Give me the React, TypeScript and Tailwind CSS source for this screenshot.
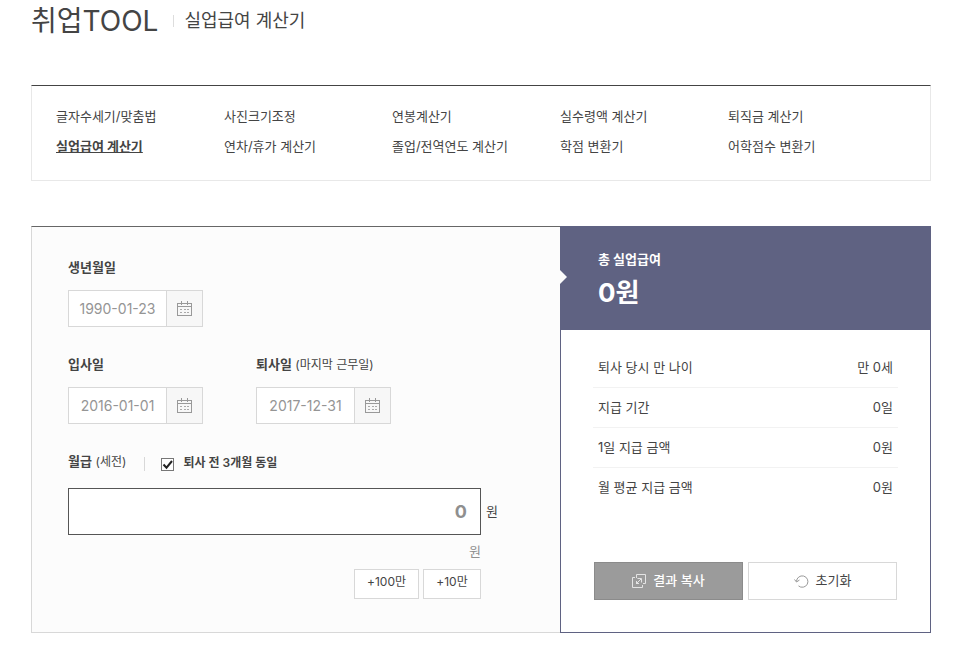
import { useState } from "react";

const tools = [
  "글자수세기/맞춤법",
  "사진크기조정",
  "연봉계산기",
  "실수령액 계산기",
  "퇴직금 계산기",
  "실업급여 계산기",
  "연차/휴가 계산기",
  "졸업/전역연도 계산기",
  "학점 변환기",
  "어학점수 변환기",
];

const results = [
  ["퇴사 당시 만 나이", "만 0세"],
  ["지급 기간", "0일"],
  ["1일 지급 금액", "0원"],
  ["월 평균 지급 금액", "0원"],
];

function CalendarIcon() {
  return (
    <svg width="15" height="15" viewBox="0 0 15 15" fill="none" stroke="#999" shapeRendering="crispEdges" aria-hidden="true">
      <path d="M0.5 2.5h14v12h-14zM0 5.5h15M4.5 0v4M10.5 0v4" />
      <path d="M3 8.5h9M3 11.5h9" stroke="#aaa" strokeDasharray="2 1.5" />
    </svg>
  );
}

function CopyIcon() {
  return (
    <svg width="14" height="14" viewBox="0 0 14 14" fill="none" stroke="#e4e4e4" aria-hidden="true">
      <path d="M4.5 4V0.5h9v9H11" />
      <path d="M3 3.5H0.5v10h10V11" />
      <path d="M4 10l5-5M5.5 4.5h4v4M4.5 7v2.500h2.500" />
    </svg>
  );
}

function ResetIcon() {
  return (
    <svg width="15" height="13" viewBox="0 0 15 13" fill="none" stroke="#999" aria-hidden="true">
      <path d="M2.500 6.500a5.700 5.700 0 1 1 2 4.400" />
      <path d="M0.500 4.500l2 2.500 3-2" />
    </svg>
  );
}

function DateField({ id, label, note, initial }: { id: string; label: string; note?: string; initial: string }) {
  const [value, setValue] = useState(initial);
  return (
    <div>
      <label htmlFor={id} className="block h-5 leading-5">
        <span className="font-bold">{label}</span>
        {note && <span className="text-xs leading-5"> {note}</span>}
      </label>
      <div className="mt-[13px] flex h-[37px] w-[135px] border border-[#d8d8d8] bg-white">
        <input
          id={id}
          type="text"
          value={value}
          onChange={(e) => setValue(e.target.value)}
          className="w-[98px] border-r border-[#d8d8d8] text-center text-sm text-[#959595] outline-none"
        />
        <button type="button" aria-label={`${label} 달력`} className="flex flex-1 items-center justify-center bg-[#f7f7f7]">
          <CalendarIcon />
        </button>
      </div>
    </div>
  );
}

export default function App() {
  const [pay, setPay] = useState("0");
  const [same, setSame] = useState(true);

  return (
    <div className="bg-white pr-[45px] pb-6 pl-[31px] font-['Inter','Noto_Sans_CJK_KR',sans-serif] text-[13px] text-[#444]">
      <header className="flex h-[42px] items-center">
        <h1 className="text-[28px] leading-10">취업TOOL</h1>
        <span className="mr-2.5 ml-[15px] h-3 w-px bg-[#ddd]" />
        <h2 className="text-lg leading-10">실업급여 계산기</h2>
      </header>

      <nav className="mt-[43px] border border-t-[#444] border-r-[#e8e8e8] border-b-[#e8e8e8] border-l-[#e8e8e8] pt-[15px] pr-[34px] pb-[19px] pl-6">
        <ul className="grid grid-cols-5">
          {tools.map((tool) => (
            <li key={tool} className="leading-[30px]">
              <a href="#" className={tool === "실업급여 계산기" ? "font-bold underline" : ""}>
                {tool}
              </a>
            </li>
          ))}
        </ul>
      </nav>

      <main className="mt-[45px] flex">
        <form className="flex-1 border border-r-0 border-t-[#666] border-b-[#d8d8d8] border-l-[#d8d8d8] bg-[#fcfcfc] px-9 pt-[30px] pb-[33px]">
          <DateField id="birth" label="생년월일" initial="1990-01-23" />
          <div className="mt-[27px] flex gap-[53px]">
            <DateField id="join" label="입사일" initial="2016-01-01" />
            <DateField id="leave" label="퇴사일" note="(마지막 근무일)" initial="2017-12-31" />
          </div>

          <div className="mt-[27px] flex h-5 items-center">
            <label htmlFor="pay" className="h-5 leading-5">
              <span className="font-bold">월급</span> <span className="text-xs leading-5">(세전)</span>
            </label>
            <span className="mt-1.5 mr-4 ml-[18px] h-3.5 w-px bg-[#d8d8d8]" />
            <span className="mt-1.5 grid size-[13px]">
              <input
                id="same"
                type="checkbox"
                checked={same}
                onChange={(e) => setSame(e.target.checked)}
                className="col-start-1 row-start-1 size-[13px] appearance-none border border-[#777] bg-white"
              />
              {same && (
                <svg viewBox="0 0 13 13" className="pointer-events-none col-start-1 row-start-1 size-[13px]" fill="none" stroke="#222" strokeWidth="2" aria-hidden="true">
                  <path d="M2.500 6.500l3 3.200L11 3" />
                </svg>
              )}
            </span>
            <label htmlFor="same" className="mt-1 ml-[9px] text-xs leading-5 font-semibold">
              퇴사 전 3개월 동일
            </label>
          </div>

          <div className="mt-[17px] flex items-center gap-[5px]">
            <input
              id="pay"
              type="text"
              value={pay}
              onChange={(e) => setPay(e.target.value)}
              className="h-[47px] w-[413px] border border-[#555] bg-white pr-[13px] text-right text-lg font-bold text-[#8f8f8f] outline-none"
            />
            <span>원</span>
          </div>
          <div className="w-[413px]">
            <p className="mt-1.5 text-right leading-5 text-[#8f8f8f]">원</p>
            <div className="mt-2 flex justify-end gap-1">
              <button type="button" className="h-[30px] w-[65px] border border-[#d8d8d8] bg-white pb-1 text-xs">
                +100만
              </button>
              <button type="button" className="h-[30px] w-[58px] border border-[#d8d8d8] bg-white pb-1 text-xs">
                +10만
              </button>
            </div>
          </div>
        </form>

        <section className="flex w-[371px] flex-col border border-[#5f6282] bg-white">
          <div className="relative h-[103px] bg-[#5f6282] pt-[22px] pl-[37px] text-white">
            <svg width="7" height="14" viewBox="0 0 7 14" className="absolute top-[43px] left-[-1px]" fill="#fcfcfc" aria-hidden="true">
              <path d="M0 0l7 7-7 7z" />
            </svg>
            <h3 className="leading-5 font-bold">총 실업급여</h3>
            <p className="text-[26px] leading-[48px] font-bold">0원</p>
          </div>
          <dl className="px-8 pt-[18px]">
            {results.map(([name, value]) => (
              <div key={name} className="flex h-10 items-center justify-between border-b border-[#f2f2f2] px-[5px] last:border-b-0">
                <dt>{name}</dt>
                <dd>{value}</dd>
              </div>
            ))}
          </dl>
          <div className="mt-auto flex gap-[5px] px-[33px] pb-8">
            <button type="button" className="flex h-[38px] flex-1 items-center justify-center gap-[7px] border border-[#8b8b8b] bg-[#9b9b9b] font-medium text-white">
              <CopyIcon />
              결과 복사
            </button>
            <button type="button" className="flex h-[38px] flex-1 items-center justify-center gap-[7px] border border-[#d8d8d8] bg-white">
              <ResetIcon />
              초기화
            </button>
          </div>
        </section>
      </main>
    </div>
  );
}
